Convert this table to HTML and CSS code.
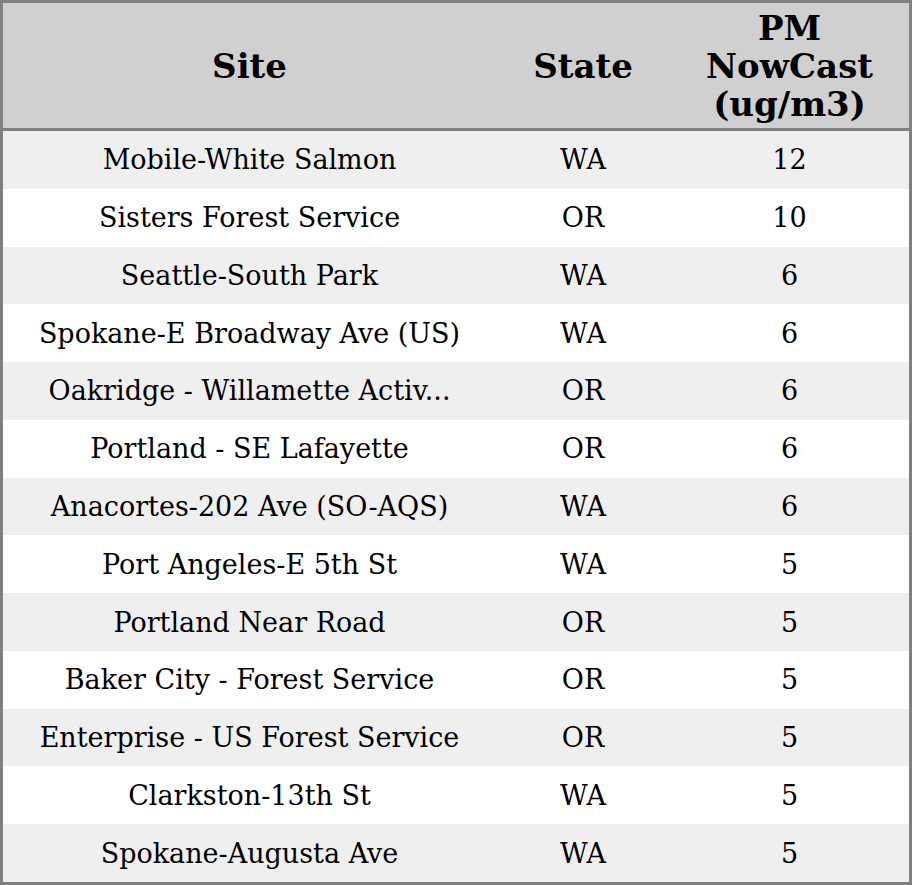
FILE: index.html
```html
<!DOCTYPE html>
<html>
<head>
<meta charset="utf-8">
<link rel="stylesheet" href="styles.css">
</head>
<body>
<table class="grid">
  <colgroup>
    <col class="c-site"><col class="c-state"><col class="c-pm">
  </colgroup>
  <thead>
    <tr class="head"><th>Site</th><th>State</th><th>PM<br>NowCast<br>(ug/m3)</th></tr>
  </thead>
  <tbody>
    <tr class="odd"><td>Mobile-White Salmon</td><td>WA</td><td>12</td></tr>
    <tr><td>Sisters Forest Service</td><td>OR</td><td>10</td></tr>
    <tr class="odd"><td>Seattle-South Park</td><td>WA</td><td>6</td></tr>
    <tr><td>Spokane-E Broadway Ave (US)</td><td>WA</td><td>6</td></tr>
    <tr class="odd"><td>Oakridge - Willamette Activ...</td><td>OR</td><td>6</td></tr>
    <tr><td>Portland - SE Lafayette</td><td>OR</td><td>6</td></tr>
    <tr class="odd"><td>Anacortes-202 Ave (SO-AQS)</td><td>WA</td><td>6</td></tr>
    <tr><td>Port Angeles-E 5th St</td><td>WA</td><td>5</td></tr>
    <tr class="odd"><td>Portland Near Road</td><td>OR</td><td>5</td></tr>
    <tr><td>Baker City - Forest Service</td><td>OR</td><td>5</td></tr>
    <tr class="odd"><td>Enterprise - US Forest Service</td><td>OR</td><td>5</td></tr>
    <tr><td>Clarkston-13th St</td><td>WA</td><td>5</td></tr>
    <tr class="odd"><td>Spokane-Augusta Ave</td><td>WA</td><td>5</td></tr>
  </tbody>
</table>
</body>
</html>
```
FILE: styles.css
```css
html, body {
  margin: 0;
  padding: 0;
  background: #ffffff;
}
.grid {
  width: 912px;
  height: 885px;
  border-collapse: separate;
  border-spacing: 0;
  border: 3px solid #808080;
  box-sizing: border-box;
  table-layout: fixed;
  font-family: "DejaVu Serif", serif;
  color: #000;
}
.c-site { width: 493px; }
.c-state { width: 174px; }
.c-pm { width: 239px; }
.head th {
  background: #d0d0d0;
  height: 125px;
  padding: 0;
  border-bottom: 3px solid #808080;
  font-size: 34px;
  font-weight: bold;
  line-height: 38px;
  text-align: center;
  vertical-align: middle;
}
tbody td {
  height: 57.77px;
  padding: 0;
  font-size: 27px;
  text-align: center;
  vertical-align: middle;
  background: #ffffff;
  white-space: nowrap;
}
tbody tr.odd td {
  background: #efefef;
}
```
